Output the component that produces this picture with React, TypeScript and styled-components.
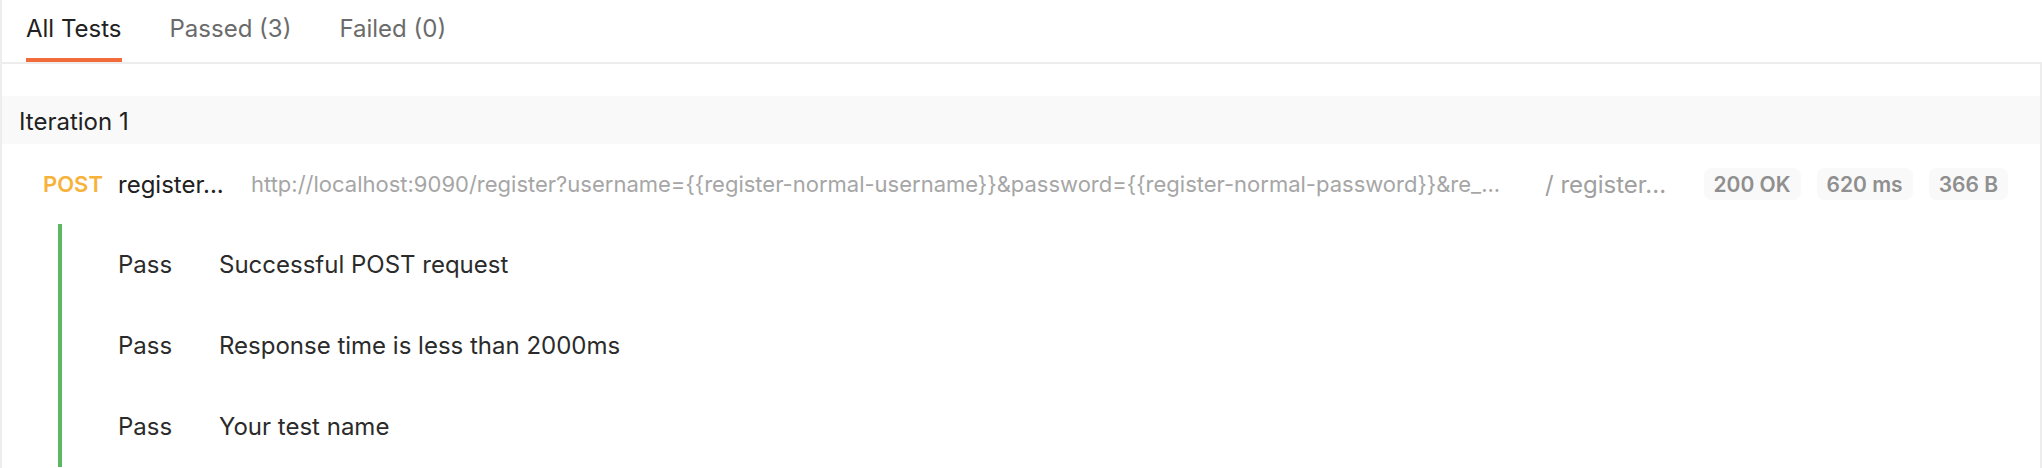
import React from 'react'
import styled, { createGlobalStyle } from 'styled-components'

const GlobalStyle = createGlobalStyle`
  html, body {
    margin: 0;
    padding: 0;
    background: #ffffff;
  }

  body {
    font-family: Inter, "Noto Sans", "Liberation Sans", sans-serif;
    color: #212121;
  }
`

const Page = styled.div`
  width: 2042px;
  height: 468px;
  box-sizing: border-box;
  border-left: 2px solid #ededed;
  overflow: hidden;
`

const TabBar = styled.div`
  display: flex;
  gap: 48px;
  padding-left: 24px;
  height: 62px;
`

const Tab = styled.div<{ $active?: boolean }>`
  display: flex;
  align-items: center;
  box-sizing: border-box;
  height: 62px;
  padding-bottom: 2px;
  font-size: 24px;
  color: ${props => (props.$active ? '#212121' : '#6b6b6b')};
  border-bottom: 4px solid ${props => (props.$active ? '#f26b3a' : 'transparent')};
  cursor: pointer;
`

const Panel = styled.div`
  border-top: 2px solid #ededed;
  border-right: 2px solid #ededed;
  padding-top: 32px;
  height: 100%;
`

const IterationHeader = styled.div`
  display: flex;
  align-items: center;
  box-sizing: border-box;
  height: 48px;
  padding: 2px 0 0 17px;
  background: #f9f9f9;
  font-size: 24px;
  color: #212121;
`

const RequestRow = styled.div`
  display: flex;
  align-items: center;
  height: 80px;
  padding: 0 32px 0 41px;
  white-space: nowrap;
`

const Method = styled.span`
  width: 75px;
  flex-shrink: 0;
  font-size: 22px;
  font-weight: 600;
  color: #f7b23b;
`

const RequestName = styled.span`
  width: 133px;
  flex-shrink: 0;
  font-size: 24px;
  color: #212121;
`

const Url = styled.span`
  width: 1294px;
  flex-shrink: 0;
  overflow: hidden;
  font-size: 22px;
  color: #a6a6a6;
`

const Path = styled.span`
  flex: 1;
  font-size: 24px;
  color: #a0a0a0;
`

const Badges = styled.div`
  display: flex;
  gap: 16px;
`

const Badge = styled.span`
  display: flex;
  align-items: center;
  height: 32px;
  padding: 0 10px;
  border-radius: 8px;
  background: #f9f9f9;
  font-size: 21px;
  font-weight: 600;
  color: #8f8f8f;
`

const TestList = styled.div`
  margin-left: 56px;
  border-left: 4px solid #5cb860;
`

const TestRow = styled.div`
  display: flex;
  align-items: center;
  height: 81px;
  padding-left: 56px;
  font-size: 24px;
  color: #2b2b2b;
`

const TestStatus = styled.span`
  width: 101px;
  flex-shrink: 0;
`

const TestName = styled.span``

const tests = [
  'Successful POST request',
  'Response time is less than 2000ms',
  'Your test name',
]

export default function App() {
  return (
    <>
      <GlobalStyle />
      <Page>
        <TabBar>
          <Tab $active>All Tests</Tab>
          <Tab>Passed (3)</Tab>
          <Tab>Failed (0)</Tab>
        </TabBar>
        <Panel>
          <IterationHeader>Iteration 1</IterationHeader>
          <RequestRow>
            <Method>POST</Method>
            <RequestName>register...</RequestName>
            <Url>
              http://localhost:9090/register?username={'{{register-normal-username}}'}&amp;password={'{{register-normal-password}}'}&amp;re_...
            </Url>
            <Path>/ register...</Path>
            <Badges>
              <Badge>200 OK</Badge>
              <Badge>620 ms</Badge>
              <Badge>366 B</Badge>
            </Badges>
          </RequestRow>
          <TestList>
            {tests.map(name => (
              <TestRow key={name}>
                <TestStatus>Pass</TestStatus>
                <TestName>{name}</TestName>
              </TestRow>
            ))}
          </TestList>
        </Panel>
      </Page>
    </>
  )
}
